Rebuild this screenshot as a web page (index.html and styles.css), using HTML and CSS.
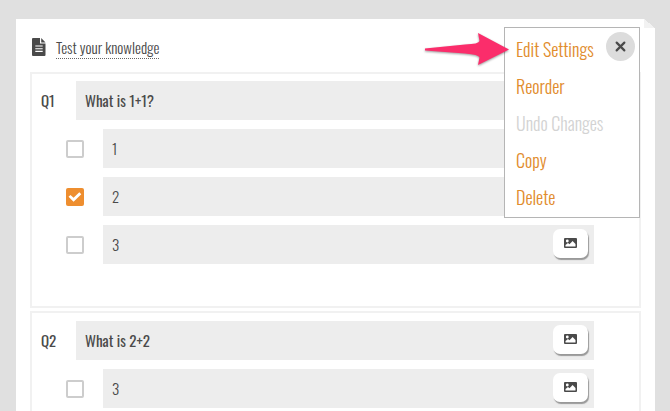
FILE: index.html
```
<!DOCTYPE html>
<html lang="en">
<head>
<meta charset="utf-8">
<title>Test your knowledge</title>
<link rel="stylesheet" href="styles.css">
</head>
<body>
<svg class="sprite" aria-hidden="true">
  <symbol id="picture" viewBox="0 0 13 11">
    <path fill-rule="evenodd" d="M1 0h11q1 0 1 1v8q0 1-1 1H1q-1 0-1-1V1q0-1 1-1zM3.300 1.600a1.400 1.400 0 1 0 0 2.800a1.400 1.400 0 0 0 0-2.800zM1.500 8.500h10V6L8.600 3L5.500 6.200L4 5L1.500 7z"/>
  </symbol>
</svg>
<main class="sheet">
  <header class="title">
    <svg class="doc" viewBox="0 0 14 18" aria-hidden="true">
      <path fill="#4a4a4a" d="M1 0h7v5.500h5.500V17q0 1-1 1H1q-1 0-1-1V1q0-1 1-1zM9.200 0l4.300 4.400H9.200z"/>
      <path stroke="#fff" stroke-width="1.100" d="M3.300 8h7.400M3.300 10.700h7.400M3.300 13.400h7.400"/>
    </svg>
    <a class="name" href="#">Test your knowledge</a>
  </header>

  <section class="card first">
    <div class="row">
      <label class="number" for="q1">Q1</label>
      <div class="field"><input class="text strong" id="q1" value="What is 1+1?"></div>
    </div>
    <div class="row option">
      <input class="check" type="checkbox" aria-label="Answer 1 is correct">
      <div class="field"><input class="text" aria-label="Answer 1" value="1"></div>
    </div>
    <div class="row option">
      <input class="check" type="checkbox" aria-label="Answer 2 is correct" checked>
      <div class="field"><input class="text" aria-label="Answer 2" value="2"></div>
    </div>
    <div class="row option">
      <input class="check" type="checkbox" aria-label="Answer 3 is correct">
      <div class="field"><input class="text" aria-label="Answer 3" value="3"><button class="image" aria-label="Add image"><svg><use href="#picture"/></svg></button></div>
    </div>
  </section>

  <section class="card">
    <div class="row">
      <label class="number" for="q2">Q2</label>
      <div class="field"><input class="text strong" id="q2" value="What is 2+2"><button class="image" aria-label="Add image"><svg><use href="#picture"/></svg></button></div>
    </div>
    <div class="row option">
      <input class="check" type="checkbox" aria-label="Answer 1 is correct">
      <div class="field"><input class="text" aria-label="Answer 1" value="3"><button class="image" aria-label="Add image"><svg><use href="#picture"/></svg></button></div>
    </div>
  </section>

  <nav class="menu" aria-label="Question set">
    <button class="item">Edit Settings</button>
    <button class="item">Reorder</button>
    <button class="item" disabled>Undo Changes</button>
    <button class="item">Copy</button>
    <button class="item">Delete</button>
    <button class="close" aria-label="Close"><svg viewBox="0 0 10 10"><path d="M1.500 1.500l7 7M8.500 1.500l-7 7"/></svg></button>
  </nav>
  <svg class="arrow" viewBox="0 0 84 34" aria-hidden="true">
    <path d="M0 15.500L40 11.500Q54 11 54.500 8L53 0L84 16.500L53 32L54.500 24.500Q54 21.500 40 20.500L0 17.500z"/>
  </svg>
</main>
</body>
</html>
```
FILE: styles.css
```
* { box-sizing: border-box; }

body {
  margin: 0;
  padding: 19px 15px 0 16px;
  background: #e0e0e0;
  color: #4a4a4a;
  font-family: Oswald, "Liberation Sans", sans-serif;
  font-size: 15px;
  font-weight: 300;
}

button, input { margin: 0; font: inherit; color: inherit; }
button { padding: 0; border: 0; }

.sprite { position: absolute; width: 0; height: 0; }

.sheet {
  position: relative;
  min-height: calc(100vh - 19px);
  padding: 16px 14px 0;
  background: #fff;
}

/* folded corner */
.sheet::after {
  content: "";
  position: absolute;
  top: 0;
  right: 0;
  width: 11px;
  height: 9px;
  background: linear-gradient(to top right, #f2f2f2 50%, #e0e0e0 50%);
}

.title {
  display: flex;
  align-items: center;
  gap: 10px;
  height: 24px;
  margin: 0 2px 13px;
}

.doc { width: 14px; height: 18px; }

.name {
  height: 24px;
  line-height: 24px;
  border-bottom: 1px dotted #666;
  color: #4a4a4a;
  text-decoration: none;
}

.card {
  display: flex;
  flex-direction: column;
  gap: 9px;
  margin-bottom: 3px;
  padding: 8px 45px 8px 9px;
  border: 2px solid #f1f1f1;
}

.first { padding-top: 7px; padding-bottom: 42px; }

.row { display: flex; align-items: center; }
.number { width: 35px; padding-bottom: 2px; font-weight: 400; }
.option { padding-left: 25px; }

.field {
  flex: 1;
  display: flex;
  align-items: center;
  height: 39px;
  padding: 0 6px 0 9px;
  background: #ededed;
}

.text {
  flex: 1;
  min-width: 0;
  padding: 0 0 2px;
  border: 0;
  background: none;
}

.strong { font-weight: 400; }

.check {
  appearance: none;
  width: 18px;
  height: 18px;
  margin-right: 19px;
  border: 2px solid #cdcdcd;
  border-radius: 2px;
  background: #fff;
}

.check:checked {
  border: 0;
  background: #ee8e2f;
}

.check:checked::before {
  content: "";
  display: block;
  height: 18px;
  background: #fff;
  clip-path: polygon(14% 51%, 25% 41%, 42% 57%, 74% 26%, 85% 37%, 42% 79%);
}

.image {
  display: flex;
  align-items: center;
  justify-content: center;
  width: 35px;
  height: 29px;
  margin-bottom: 3px;
  border-radius: 7px;
  background: #fff;
  box-shadow: 1px 2px 1px #999;
}

.image svg { width: 13px; height: 11px; fill: #4a4a4a; }

.menu {
  position: absolute;
  top: 8px;
  right: 15px;
  display: flex;
  flex-direction: column;
  align-items: flex-start;
  width: 136px;
  padding: 2px 11px;
  border: 1px solid #b5b5b5;
  background: #fff;
}

.item {
  height: 37px;
  background: none;
  color: #e18c2d;
  font-size: 18px;
  white-space: nowrap;
}

.item:disabled { color: #d3d3d3; }

.close {
  position: absolute;
  top: 4px;
  right: 4px;
  display: flex;
  align-items: center;
  justify-content: center;
  width: 29px;
  height: 29px;
  border-radius: 50%;
  background: #dcdcdc;
}

.close svg { width: 11px; height: 11px; stroke: #4a4a4a; stroke-width: 2; stroke-linecap: round; }

.arrow {
  position: absolute;
  top: 14px;
  right: 146px;
  width: 84px;
  height: 34px;
  fill: #fb2d6b;
  filter: drop-shadow(0 1px 1px #0006);
}
```
